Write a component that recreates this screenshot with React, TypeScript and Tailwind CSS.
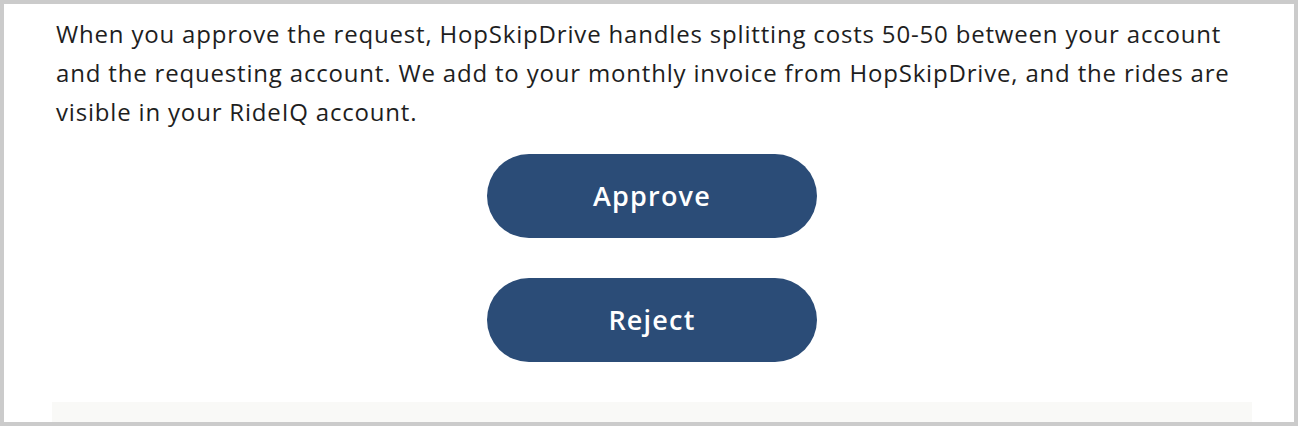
import React from "react";

export default function App() {
  return (
    <div className="w-[1298px] h-[426px] border-4 border-[#cbcbcb] bg-white overflow-hidden" style={{ fontFamily: "'Open Sans', sans-serif" }}>
      <div className="ml-12 w-[1200px] pt-[10px]">
        <p className="text-[24px] leading-[39px] tracking-[0.82px] text-[#1e1e1e] pl-1 whitespace-nowrap">
          When you approve the request, HopSkipDrive handles splitting costs 50-50 between your account
          <br />
          and the requesting account. We add to your monthly invoice from HopSkipDrive, and the rides are
          <br />
          visible in your RideIQ account.
        </p>
        <div className="flex flex-col items-center gap-10 mt-[23px]">
          <button className="w-[330px] h-[84px] rounded-full bg-[#2b4c77] text-white text-[27px] tracking-[1.2px] font-semibold">
            Approve
          </button>
          <button className="w-[330px] h-[84px] rounded-full bg-[#2b4c77] text-white text-[27px] tracking-[1.2px] font-semibold">
            Reject
          </button>
        </div>
        <div className="mt-10 h-[40px] bg-[#f9f9f7]" />
      </div>
    </div>
  );
}
